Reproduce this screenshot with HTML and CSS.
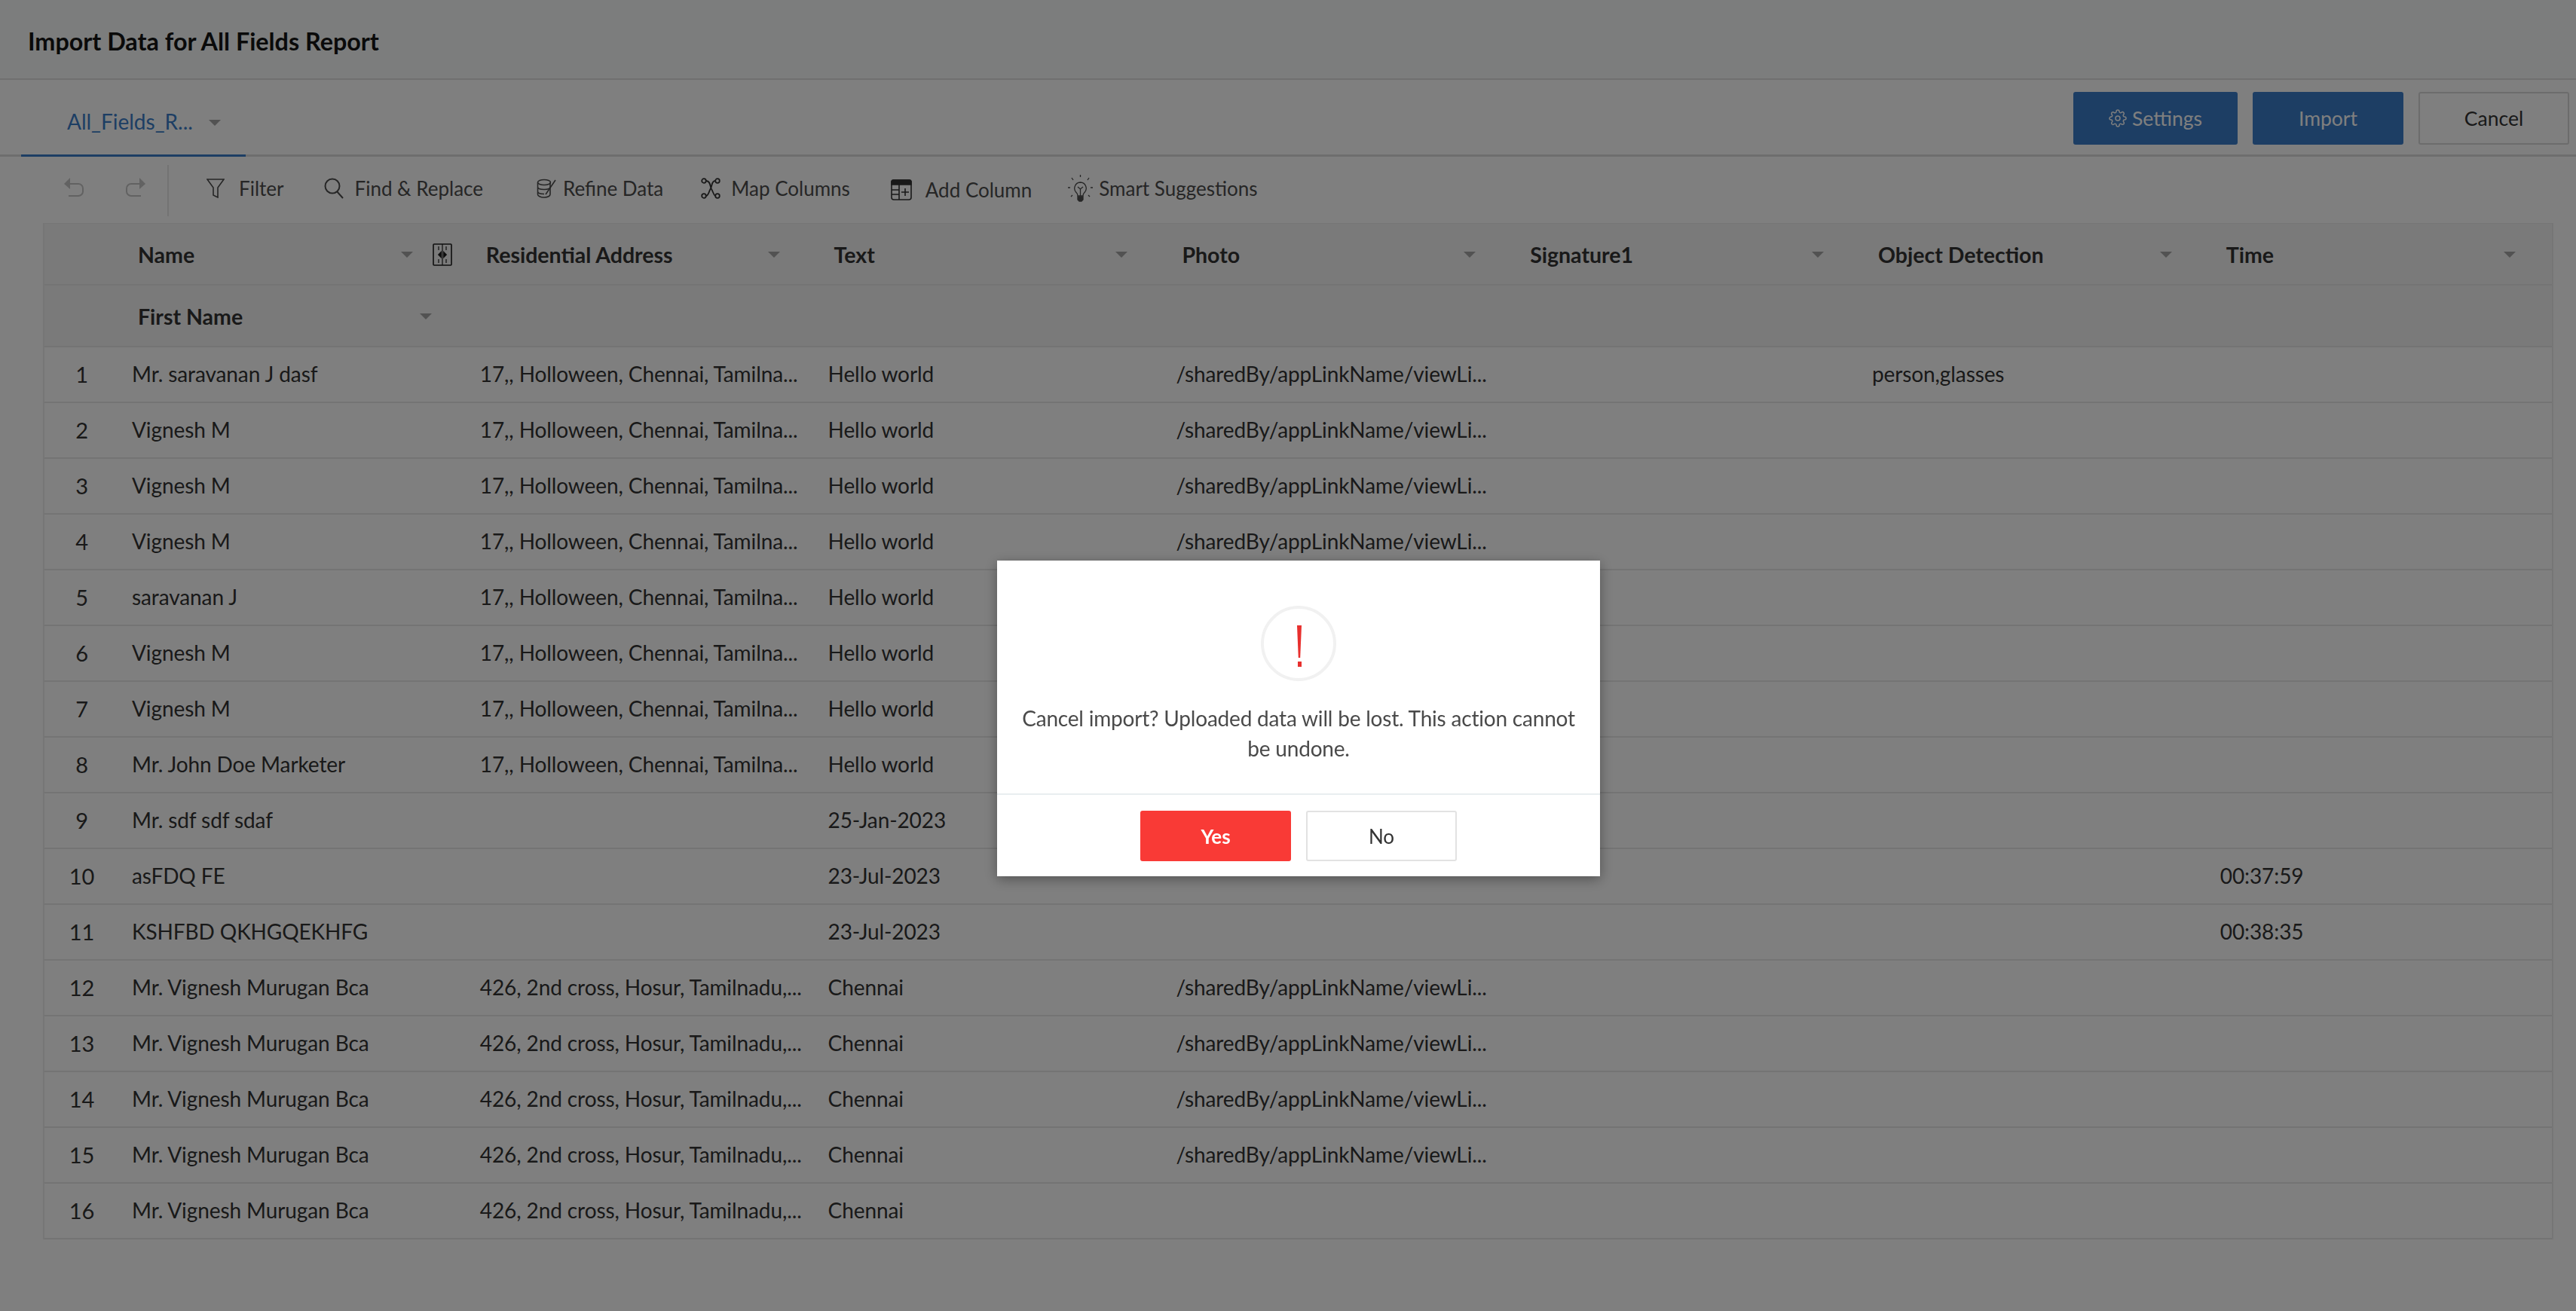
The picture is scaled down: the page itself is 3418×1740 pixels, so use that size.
FILE: index.html
```html
<!DOCTYPE html>
<html>
<head>
  <title>Import Data for All Fields Report</title>
  <meta charset="UTF-8" />
  <link rel="stylesheet" href="styles.css">
</head>
<body>

  <!-- Title bar -->
  <div class="title-bar">
    <h1>Import Data for All Fields Report</h1>
  </div>

  <!-- Sheet tab and main actions -->
  <div class="tab-bar">
    <div class="tab">
      <span>All_Fields_R...</span>
      <i class="caret tab-caret"></i>
    </div>
    <div class="actions">
      <button class="btn btn-blue settings-btn">
        <svg viewBox="0 0 24 24" width="24" height="24" fill="none" stroke="#fff" stroke-width="1.500"><circle cx="12" cy="12" r="3"/><path d="M19.4 15a1.65 1.65 0 0 0 .33 1.82l.06.06a2 2 0 0 1 0 2.83 2 2 0 0 1-2.83 0l-.06-.06a1.65 1.65 0 0 0-1.82-.33 1.65 1.65 0 0 0-1 1.51V21a2 2 0 0 1-2 2 2 2 0 0 1-2-2v-.09A1.65 1.65 0 0 0 9 19.4a1.65 1.65 0 0 0-1.82.33l-.06.06a2 2 0 0 1-2.83 0 2 2 0 0 1 0-2.83l.06-.06a1.65 1.65 0 0 0 .33-1.82 1.65 1.65 0 0 0-1.51-1H3a2 2 0 0 1-2-2 2 2 0 0 1 2-2h.09A1.65 1.65 0 0 0 4.6 9a1.65 1.65 0 0 0-.33-1.82l-.06-.06a2 2 0 0 1 0-2.83 2 2 0 0 1 2.83 0l.06.06a1.65 1.65 0 0 0 1.82.33H9a1.65 1.65 0 0 0 1-1.51V3a2 2 0 0 1 2-2 2 2 0 0 1 2 2v.09a1.65 1.65 0 0 0 1 1.51 1.65 1.65 0 0 0 1.82-.33l.06-.06a2 2 0 0 1 2.83 0 2 2 0 0 1 0 2.83l-.06.06a1.65 1.65 0 0 0-.33 1.82V9a1.65 1.65 0 0 0 1.51 1H21a2 2 0 0 1 2 2 2 2 0 0 1-2 2h-.09a1.65 1.65 0 0 0-1.51 1z"/></svg>
        <span>Settings</span>
      </button>
      <button class="btn btn-blue">Import</button>
      <button class="btn btn-plain">Cancel</button>
    </div>
  </div>

  <!-- Toolbar -->
  <div class="toolbar">
    <svg class="tool-icon" viewBox="0 0 28 30" width="28" height="30" fill="none" stroke="#c4c4c4" stroke-width="2"><path d="M8 10h12a6 6 0 0 1 6 6v4a6 6 0 0 1-6 6H7"/><path d="M9 2v15L1 10z" fill="#c4c4c4" stroke="none"/></svg>
    <svg class="tool-icon redo" viewBox="0 0 28 30" width="28" height="30" fill="none" stroke="#c4c4c4" stroke-width="2"><path d="M20 10H8a6 6 0 0 0-6 6v4a6 6 0 0 0 6 6h13"/><path d="M19 2v15l8-7z" fill="#c4c4c4" stroke="none"/></svg>
    <div class="tool-sep"></div>
    <div class="tool filter-tool">
      <svg viewBox="0 0 24 26" width="24" height="26" fill="none" stroke="#4c4c4c" stroke-width="1.600"><path d="M1 1h22l-8 11v13l-6-3V12z"/></svg>
      <span>Filter</span>
    </div>
    <div class="tool find-tool">
      <svg viewBox="0 0 26 28" width="26" height="28" fill="none" stroke="#4c4c4c" stroke-width="2"><ellipse cx="11" cy="11" rx="9.500" ry="9.500"/><path d="M17 18l8 9"/></svg>
      <span>Find &amp; Replace</span>
    </div>
    <div class="tool refine-tool">
      <svg viewBox="0 0 27 28" width="27" height="28" fill="none" stroke="#4c4c4c" stroke-width="1.600"><ellipse cx="10" cy="6" rx="8.500" ry="3.500"/><path d="M1.500 6v16c0 2 3.500 4 8.500 4s8-2 8-4V6M1.500 12c0 2 3.500 3.500 8.500 3.500s8-1.500 8-3.500M1.500 18c0 2 3.500 3.500 8.500 3.500"/><path d="M12 22L25 3"/></svg>
      <span>Refine Data</span>
    </div>
    <div class="tool map-tool">
      <svg viewBox="0 0 26 28" width="26" height="28" fill="none" stroke="#333" stroke-width="1.800"><circle cx="4" cy="4" r="2.800"/><circle cx="22" cy="4" r="2.800"/><circle cx="4" cy="24" r="2.800"/><circle cx="22" cy="24" r="2.800"/><path d="M7 4c6 0 5 8 7 11s3 8 5 9M19 4c-5 0-4 7-6 10s-3 10-6 10"/></svg>
      <span>Map Columns</span>
    </div>
    <div class="tool add-tool">
      <svg viewBox="0 0 28 28" width="28" height="28" fill="none" stroke="#333" stroke-width="1.600"><rect x="1" y="1" width="26" height="26" rx="3"/><path d="M1 2.500a2 2 0 0 1 2-1.500h22a2 2 0 0 1 2 1.500V7H1z" fill="#333"/><path d="M11 7v20M1 14h10M1 20h10M19 12v10M14 17h10"/></svg>
      <span>Add Column</span>
    </div>
    <div class="tool bulb-tool">
      <svg viewBox="0 0 33 36" width="33" height="36" fill="none" stroke="#4c4c4c" stroke-width="1.300"><path d="M16.500 10a8 8 0 0 0-5 14c1 1 1.500 2 1.500 4h7c0-2 .5-3 1.500-4a8 8 0 0 0-5-14z"/><path d="M16.500 0v3M5 4l2 3M28 4l-2 3M0 17h3M30 17h3M4 29l2-2M29 29l-2-2M16.500 28v-10M13 16l3.500 3 3.500-3"/><path d="M13 29h7v4l-2 2h-3l-2-2z" fill="#4c4c4c"/></svg>
      <span>Smart Suggestions</span>
    </div>
  </div>

  <!-- Preview table -->
  <div class="grid">
    <div class="row head-row">
      <div class="num"></div>
      <div class="cell head-cell name-head">
        <span>Name</span><i class="caret"></i>
        <svg class="resize-icon" viewBox="0 0 26 30" width="26" height="30" fill="none" stroke="#1c1c1c" stroke-width="1.600"><rect x="1" y="1" width="24" height="28" rx="1"/><path d="M13 1v28M8 4v5M18 4v5M8 21v5M18 21v5" stroke-width="1.200"/><path d="M8 15l3-3v6zM18 15l-3-3v6z" fill="#1c1c1c"/></svg>
      </div>
      <div class="cell head-cell"><span>Residential Address</span><i class="caret"></i></div>
      <div class="cell head-cell"><span>Text</span><i class="caret"></i></div>
      <div class="cell head-cell"><span>Photo</span><i class="caret"></i></div>
      <div class="cell head-cell"><span>Signature1</span><i class="caret"></i></div>
      <div class="cell head-cell"><span>Object Detection</span><i class="caret"></i></div>
      <div class="cell head-cell last-head"><span>Time</span><i class="caret"></i></div>
    </div>
    <div class="row head-row sub-row">
      <div class="num"></div>
      <div class="cell head-cell"><span>First Name</span><i class="caret"></i></div>
    </div>

    <div class="row"><div class="num">1</div><div class="cell">Mr. saravanan J dasf</div><div class="cell">17,, Holloween, Chennai, Tamilna...</div><div class="cell">Hello world</div><div class="cell">/sharedBy/appLinkName/viewLi...</div><div class="cell"></div><div class="cell">person,glasses</div><div class="cell"></div></div>
    <div class="row"><div class="num">2</div><div class="cell">Vignesh M</div><div class="cell">17,, Holloween, Chennai, Tamilna...</div><div class="cell">Hello world</div><div class="cell">/sharedBy/appLinkName/viewLi...</div><div class="cell"></div><div class="cell"></div><div class="cell"></div></div>
    <div class="row"><div class="num">3</div><div class="cell">Vignesh M</div><div class="cell">17,, Holloween, Chennai, Tamilna...</div><div class="cell">Hello world</div><div class="cell">/sharedBy/appLinkName/viewLi...</div><div class="cell"></div><div class="cell"></div><div class="cell"></div></div>
    <div class="row"><div class="num">4</div><div class="cell">Vignesh M</div><div class="cell">17,, Holloween, Chennai, Tamilna...</div><div class="cell">Hello world</div><div class="cell">/sharedBy/appLinkName/viewLi...</div><div class="cell"></div><div class="cell"></div><div class="cell"></div></div>
    <div class="row"><div class="num">5</div><div class="cell">saravanan J</div><div class="cell">17,, Holloween, Chennai, Tamilna...</div><div class="cell">Hello world</div><div class="cell"></div><div class="cell"></div><div class="cell"></div><div class="cell"></div></div>
    <div class="row"><div class="num">6</div><div class="cell">Vignesh M</div><div class="cell">17,, Holloween, Chennai, Tamilna...</div><div class="cell">Hello world</div><div class="cell"></div><div class="cell"></div><div class="cell"></div><div class="cell"></div></div>
    <div class="row"><div class="num">7</div><div class="cell">Vignesh M</div><div class="cell">17,, Holloween, Chennai, Tamilna...</div><div class="cell">Hello world</div><div class="cell"></div><div class="cell"></div><div class="cell"></div><div class="cell"></div></div>
    <div class="row"><div class="num">8</div><div class="cell">Mr. John Doe Marketer</div><div class="cell">17,, Holloween, Chennai, Tamilna...</div><div class="cell">Hello world</div><div class="cell"></div><div class="cell"></div><div class="cell"></div><div class="cell"></div></div>
    <div class="row"><div class="num">9</div><div class="cell">Mr. sdf sdf sdaf</div><div class="cell"></div><div class="cell">25-Jan-2023</div><div class="cell"></div><div class="cell"></div><div class="cell"></div><div class="cell"></div></div>
    <div class="row"><div class="num">10</div><div class="cell">asFDQ FE</div><div class="cell"></div><div class="cell">23-Jul-2023</div><div class="cell"></div><div class="cell"></div><div class="cell"></div><div class="cell">00:37:59</div></div>
    <div class="row"><div class="num">11</div><div class="cell">KSHFBD QKHGQEKHFG</div><div class="cell"></div><div class="cell">23-Jul-2023</div><div class="cell"></div><div class="cell"></div><div class="cell"></div><div class="cell">00:38:35</div></div>
    <div class="row"><div class="num">12</div><div class="cell">Mr. Vignesh Murugan Bca</div><div class="cell">426, 2nd cross, Hosur, Tamilnadu,...</div><div class="cell">Chennai</div><div class="cell">/sharedBy/appLinkName/viewLi...</div><div class="cell"></div><div class="cell"></div><div class="cell"></div></div>
    <div class="row"><div class="num">13</div><div class="cell">Mr. Vignesh Murugan Bca</div><div class="cell">426, 2nd cross, Hosur, Tamilnadu,...</div><div class="cell">Chennai</div><div class="cell">/sharedBy/appLinkName/viewLi...</div><div class="cell"></div><div class="cell"></div><div class="cell"></div></div>
    <div class="row"><div class="num">14</div><div class="cell">Mr. Vignesh Murugan Bca</div><div class="cell">426, 2nd cross, Hosur, Tamilnadu,...</div><div class="cell">Chennai</div><div class="cell">/sharedBy/appLinkName/viewLi...</div><div class="cell"></div><div class="cell"></div><div class="cell"></div></div>
    <div class="row"><div class="num">15</div><div class="cell">Mr. Vignesh Murugan Bca</div><div class="cell">426, 2nd cross, Hosur, Tamilnadu,...</div><div class="cell">Chennai</div><div class="cell">/sharedBy/appLinkName/viewLi...</div><div class="cell"></div><div class="cell"></div><div class="cell"></div></div>
    <div class="row"><div class="num">16</div><div class="cell">Mr. Vignesh Murugan Bca</div><div class="cell">426, 2nd cross, Hosur, Tamilnadu,...</div><div class="cell">Chennai</div><div class="cell"></div><div class="cell"></div><div class="cell"></div><div class="cell"></div></div>
  </div>

  <!-- Confirm dialog over a dimmed page -->
  <div class="overlay"></div>
  <div class="dialog">
    <div class="dialog-body">
      <div class="alert-ring"><span class="alert-mark"></span><span class="alert-dot"></span></div>
      <p>Cancel import? Uploaded data will be lost. This action cannot be undone.</p>
    </div>
    <div class="dialog-foot">
      <button class="btn btn-red">Yes</button>
      <button class="btn btn-no">No</button>
    </div>
  </div>

</body>
</html>
```

FILE: styles.css
```css
* {
  box-sizing: border-box;
}
html, body {
  margin: 0;
  height: 100%;
  overflow: hidden;
}
body {
  width: 3418px;
  height: 1740px;
  background: #fff;
  font-family: Lato, "Open Sans", sans-serif;
  color: #333;
}

/* Title bar */
.title-bar {
  height: 106px;
  padding: 4px 0 0 37px;
  display: flex;
  align-items: center;
  background: #f8fbfa;
  border-bottom: 2px solid #e0e0e0;
}
.title-bar h1 {
  margin: 0;
  font-size: 32.300px;
  font-weight: 700;
  color: #141414;
}

/* Tab row */
.tab-bar {
  height: 102px;
  padding: 0 9px 0 28px;
  display: flex;
  justify-content: space-between;
  align-items: flex-start;
  border-bottom: 3px solid #dcdcdc;
}
.tab {
  width: 298px;
  height: 102px;
  padding: 38px 0 0 61px;
  display: flex;
  align-items: flex-start;
  font-size: 28px;
  color: #3a7cc8;
  border-bottom: 3px solid #3a7cc8;
}
.tab-caret {
  margin: 15px 0 0 21px;
}
.actions {
  display: flex;
  gap: 20px;
  padding-top: 16px;
}
.btn {
  height: 70px;
  width: 200px;
  border: 0;
  border-radius: 3px;
  font-family: Lato, sans-serif;
  font-size: 26.500px;
}
.btn-blue {
  background: #3a7cc8;
  color: #fff;
}
.settings-btn {
  width: 218px;
  display: flex;
  justify-content: center;
  align-items: center;
  gap: 7px;
}
.btn-plain {
  background: #fff;
  border: 2px solid #d8d8d8;
  color: #333;
}

/* Toolbar */
.toolbar {
  height: 88px;
  padding: 11px 0 0 84px;
  display: flex;
  align-items: flex-start;
}
.tool-icon {
  margin-top: 15px;
}
.redo {
  margin-left: 54px;
}
.tool-sep {
  width: 2px;
  height: 68px;
  margin-left: 28px;
  background: #e6e6e6;
}
.tool {
  height: 62px;
  display: flex;
  align-items: center;
  font-size: 26px;
  color: #4c4c4c;
}
.filter-tool {
  margin-left: 50px;
  gap: 19px;
}
.find-tool {
  margin-left: 54px;
  gap: 14px;
}
.refine-tool {
  margin-left: 71px;
  gap: 8px;
}
.map-tool {
  margin-left: 50px;
  gap: 14px;
}
.add-tool {
  margin-left: 54px;
  gap: 18px;
  padding-top: 4px;
}
.bulb-tool {
  margin-left: 48px;
  gap: 8px;
}

/* Table */
.grid {
  width: 3331px;
  margin-left: 57px;
  border: solid #ececec;
  border-width: 1px 2px 0 2px;
  font-size: 28px;
}
.row {
  height: 74px;
  padding-bottom: 2px;
  display: grid;
  grid-template-columns: 107px repeat(6, 461.8px) 1fr;
  align-items: center;
  border-bottom: 2px solid #e8e8e8;
  white-space: nowrap;
  letter-spacing: -0.1px;
}
.head-row {
  height: 82px;
  padding-top: 1px;
  padding-bottom: 0;
  background: #f4f4f4;
  letter-spacing: 0;
}
.num {
  padding-right: 8px;
  text-align: center;
  font-size: 29px;
}
.cell {
  padding-left: 9px;
  overflow: hidden;
}
.head-cell {
  padding: 0 55px 0 17px;
  display: flex;
  align-items: center;
  justify-content: space-between;
  font-size: 28.500px;
  font-weight: 700;
}
.name-head {
  padding-right: 28px;
}
.name-head span {
  flex: 1;
}
.last-head {
  padding-right: 48px;
}
.resize-icon {
  margin-left: 26px;
}
.caret {
  flex: none;
  display: inline-block;
  width: 0;
  height: 0;
  border-left: 8px solid transparent;
  border-right: 8px solid transparent;
  border-top: 8px solid #a4a4a4;
}

/* Dialog */
.overlay {
  position: fixed;
  inset: 0;
  background: rgba(0, 0, 0, 0.5);
}
.dialog {
  position: fixed;
  left: 1323px;
  top: 744px;
  width: 800px;
  height: 419px;
  background: #fff;
  box-shadow: 0 4px 16px rgba(0, 0, 0, 0.35);
}
.dialog-body {
  height: 311px;
  padding-top: 60px;
  text-align: center;
  border-bottom: 2px solid #e9eef0;
}
.dialog-body p {
  margin: 29px 28px 0;
  font-size: 28px;
  line-height: 40px;
  letter-spacing: -0.2px;
  color: #4a4a4a;
}
.alert-ring {
  width: 100px;
  height: 100px;
  margin: 0 auto;
  padding-top: 22px;
  display: flex;
  flex-direction: column;
  align-items: center;
  border: 4px solid #f1f1f1;
  border-radius: 50%;
}
.alert-mark {
  width: 6px;
  height: 43px;
  margin-left: 2px;
  background: #e8302e;
  clip-path: polygon(0 0, 100% 0, 70% 100%, 30% 100%);
}
.alert-dot {
  width: 5px;
  height: 7px;
  margin: 5px 0 0 2px;
  background: #e8302e;
}
.dialog-foot {
  display: flex;
  justify-content: center;
  gap: 20px;
  padding-top: 21px;
}
.btn-red {
  height: 67px;
  background: #f93a36;
  color: #fff;
  font-weight: 700;
  font-size: 26px;
}
.btn-no {
  height: 67px;
  background: #fff;
  border: 2px solid #e2e2e2;
  color: #333;
  font-size: 26px;
}
```
